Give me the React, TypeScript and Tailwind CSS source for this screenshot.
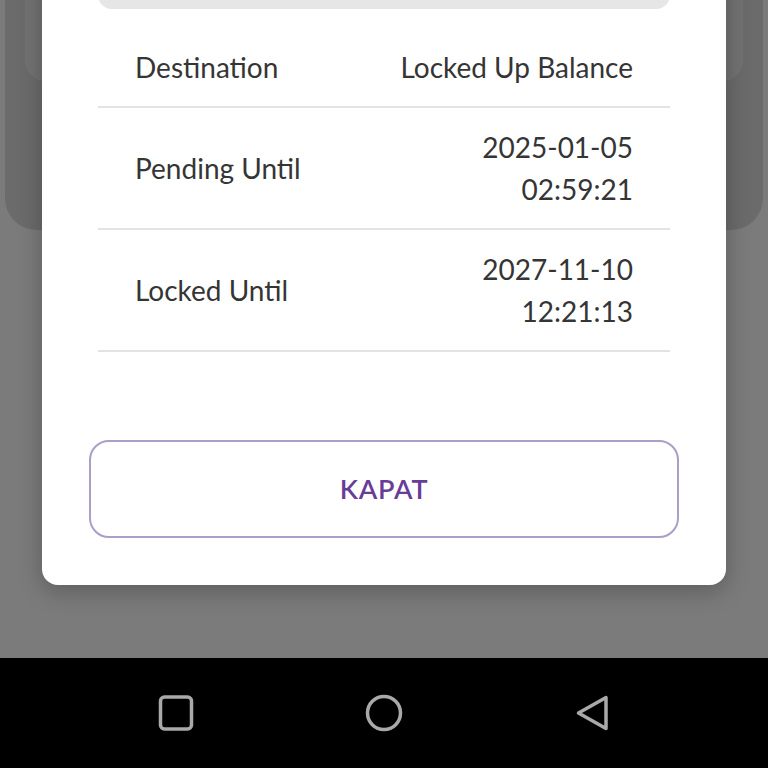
import React from "react";

const rows = [
  { label: "Destination", value: ["Locked Up Balance"] },
  { label: "Pending Until", value: ["2025-01-05", "02:59:21"] },
  { label: "Locked Until", value: ["2027-11-10", "12:21:13"] },
];

function NavBar() {
  return (
    <div className="flex h-[110px] items-center justify-center bg-black">
      <div className="flex w-[208px] justify-center">
        <svg width="40" height="40" viewBox="0 0 40 40" fill="none">
          <rect x="4.5" y="4" width="31" height="32" rx="4" stroke="#a9a9a9" strokeWidth="3.5" />
        </svg>
      </div>
      <div className="flex w-[208px] justify-center">
        <svg width="40" height="40" viewBox="0 0 40 40" fill="none">
          <circle cx="20" cy="20" r="16.5" stroke="#a9a9a9" strokeWidth="3.5" />
        </svg>
      </div>
      <div className="flex w-[208px] justify-center">
        <svg width="40" height="40" viewBox="0 0 40 40" fill="none">
          <path d="M34 4.5 L34 35.5 L6.5 20 Z" stroke="#a9a9a9" strokeWidth="3.5" strokeLinejoin="round" />
        </svg>
      </div>
    </div>
  );
}

export default function App() {
  return (
    <div
      className="flex h-[768px] w-[768px] flex-col overflow-hidden bg-[#7b7b7b]"
      style={{ fontFamily: "Lato, 'Open Sans', sans-serif" }}
    >
      <div className="relative flex-1">
        {/* dimmed page behind the dialog */}
        <div className="absolute left-[5px] right-[5px] top-[-40px] h-[270px] rounded-b-[32px] bg-[#6b6b6b]">
          <div className="mx-[20px] h-[122px] rounded-b-[22px] bg-[#727272]" />
        </div>

        {/* dialog */}
        <div className="absolute left-[42px] top-[-60px] w-[684px] rounded-[16px] bg-white px-[47px] pb-[47px] shadow-[0_6px_24px_rgba(0,0,0,0.25)]">
          <div className="mx-[9px] h-[69px] rounded-b-[14px] bg-[#e6e6e6]" />
          <div className="mx-[9px] mt-[19px]">
            {rows.map((r) => (
              <div
                key={r.label}
                className="flex items-center justify-between border-b-2 border-[#e3e3e3] px-[37px] py-[18px] text-[28px] leading-[42px] text-[#353535]"
              >
                <span>{r.label}</span>
                <div className="flex flex-col items-end">
                  {r.value.map((v) => (
                    <span key={v}>{v}</span>
                  ))}
                </div>
              </div>
            ))}
          </div>
          <button className="mt-[88px] flex h-[98px] w-full items-center justify-center rounded-[20px] border-2 border-[#ab9ec8] bg-white text-[27px] font-semibold tracking-[0.03em] text-[#693c98]">
            KAPAT
          </button>
        </div>
      </div>
      <NavBar />
    </div>
  );
}
